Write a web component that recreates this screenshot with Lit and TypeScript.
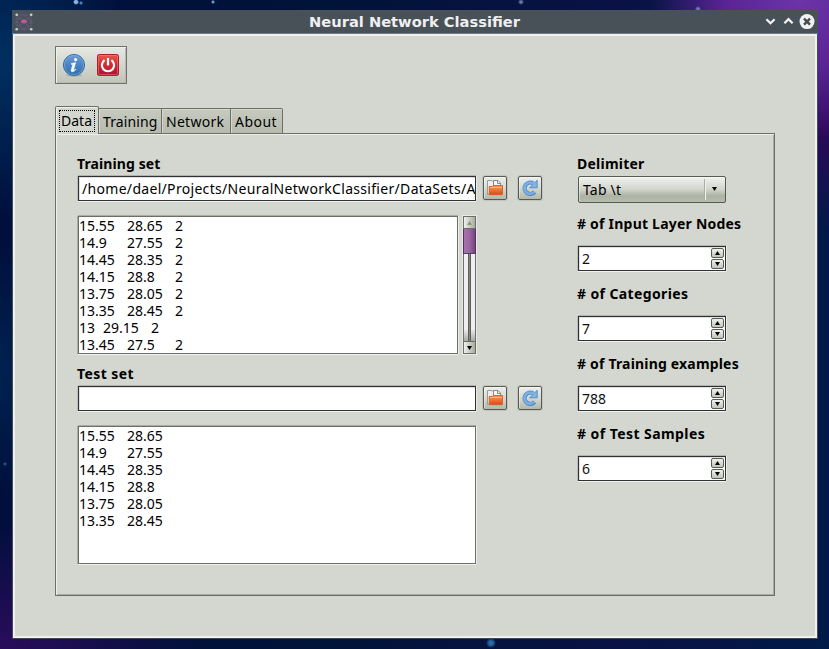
import { LitElement, html, css, svg } from "lit";
import { customElement, property } from "lit/decorators.js";

const ICONS: Record<string, { size: number; art: unknown }> = {
  app: {
    size: 20,
    art: svg`
      <g fill="none" stroke="#75698a" stroke-width=".9">
        <path d="M3 3 L17 3 L17 17 L3 17Z M10 3 L3 10 L10 17 L17 10Z M3 3 L17 17 M17 3 L3 17" stroke-dasharray="2 1" opacity=".7"/>
      </g>
      <g fill="#64508a"><circle cx="10" cy="3" r="1.4"/><circle cx="10" cy="17.3" r="1.4"/><circle cx="2.2" cy="10" r="1.2"/><circle cx="17.8" cy="10" r="1.2"/><circle cx="5.5" cy="6" r="1"/><circle cx="14.5" cy="6" r="1"/><circle cx="5.5" cy="14.5" r="1"/><circle cx="14.5" cy="14.5" r="1"/></g>
      <path d="M6.6 11 C6.8 8.6 8.4 7.2 10 7.2 C11.8 7.2 13.2 8.6 13.4 11 L11.6 10.6 L10 12 L8.4 10.6Z" fill="#bb5a99"/>
      <g fill="#c3d6c4"><circle cx="2.7" cy="2.8" r="1.3"/><circle cx="17.2" cy="2.8" r="1.3"/><circle cx="2.7" cy="17.2" r="1.3"/><circle cx="17.2" cy="17.2" r="1.3"/></g>`,
  },
  down: { size: 11, art: svg`<path d="M1.4 3.2 L5.5 7.2 L9.6 3.2" fill="none" stroke="#f1f1f1" stroke-width="2.3"/>` },
  up: { size: 11, art: svg`<path d="M1.4 7.2 L5.5 3.2 L9.6 7.2" fill="none" stroke="#f1f1f1" stroke-width="2.3"/>` },
  close: {
    size: 16,
    art: svg`<circle cx="8" cy="7.6" r="7.5" fill="#f1f1f1"/><path d="M5 4.6 L11 10.6 M11 4.6 L5 10.6" stroke="#454c54" stroke-width="2.4"/>`,
  },
  info: {
    size: 24,
    art: svg`
      <defs><linearGradient id="ib" x2="0" y2="1"><stop stop-color="#6d9fd5"/><stop offset=".5" stop-color="#4a84c4"/><stop offset="1" stop-color="#2d6fae"/></linearGradient></defs>
      <ellipse cx="12" cy="22.3" rx="8.5" ry="1.4" fill="#000" opacity=".13"/>
      <circle cx="12" cy="12" r="10.6" fill="url(#ib)" stroke="#2d659c" stroke-width=".9"/>
      <circle cx="12" cy="12" r="9.6" fill="none" stroke="#8ab4df" stroke-width=".7" opacity=".8"/>
      <circle cx="13.6" cy="6.6" r="1.6" fill="#fff"/>
      <path d="M9.2 10.6 C10.8 10.1 12.2 9.8 13.7 9.5 L11.8 16.6 C11.6 17.5 12.3 17.3 13.6 16 L14 16.5 C12.5 18.3 11.2 18.9 10 18.8 C8.9 18.6 8.9 17.7 9.2 16.6 L10.7 11.5 L9 11.3Z" fill="#fff" stroke="#fff" stroke-width=".4"/>`,
  },
  power: {
    size: 24,
    art: svg`
      <defs><linearGradient id="pr" x2="0" y2="1"><stop stop-color="#e75a4c"/><stop offset=".5" stop-color="#d52a32"/><stop offset="1" stop-color="#a9113b"/></linearGradient></defs>
      <rect x="1.5" y="1.5" width="21" height="21" rx="1.8" fill="url(#pr)" stroke="#b01c2e"/>
      <rect x="2.5" y="2.5" width="19" height="19" rx="1" fill="none" stroke="#f2907c" stroke-width=".7" opacity=".65"/>
      <path d="M8.6 7.1 A6.1 6.1 0 1 0 15.4 7.1" fill="none" stroke="#fff" stroke-width="2.2"/>
      <path d="M12 5 V12.4" stroke="#fff" stroke-width="2.2"/>`,
  },
  folder: {
    size: 18,
    art: svg`
      <defs><linearGradient id="fo" x2="0" y2="1"><stop stop-color="#ef9a5c"/><stop offset=".45" stop-color="#ee7a30"/><stop offset="1" stop-color="#e0431c"/></linearGradient></defs>
      <path d="M1.5 15.5 V1.5 H6 L8 3.5 H9.5" fill="#eeeeee" stroke="#9a9a9a"/>
      <path d="M7.5 8 V1.5 H12 L14.5 4 V8" fill="#f6f6f6" stroke="#8b8b8b"/>
      <path d="M11.5 1.5 V4.5 H14.5" fill="none" stroke="#8b8b8b"/>
      <path d="M1.5 15.5 H3" stroke="#999"/>
      <path d="M3.2 7.5 H6.5 L7.5 6.5 H16.5 V15 Q16.5 15.7 15.8 15.7 H4 Q3.3 15.7 3.2 15Z" fill="url(#fo)" stroke="#d85a28" stroke-width=".9"/>
      <path d="M4 8.5 H16" stroke="#f6bd92" stroke-width=".9"/>`,
  },
  refresh: {
    size: 18,
    art: svg`
      <path d="M13.6 13 A5.7 5.7 0 1 1 12 4.2" fill="none" stroke="#4d8aca" stroke-width="4.2"/>
      <path d="M16.2 1.2 V8.8 H8.6 L11.2 6.2 L13.4 4Z" fill="#86b3e2" stroke="#4d8aca" stroke-width=".9"/>
      <path d="M13.1 13 A5.6 5.6 0 1 1 12.8 5" fill="none" stroke="#7fafe1" stroke-width="2.5"/>`,
  },
};

@customElement("ui-icon")
class UiIcon extends LitElement {
  @property() name = "";
  static styles = css`
    :host { display: block; line-height: 0; }
    svg { display: block; }
  `;
  render() {
    const icon = ICONS[this.name];
    return html`<svg width=${icon.size} height=${icon.size} viewBox="0 0 ${icon.size} ${icon.size}">${icon.art}</svg>`;
  }
}

@customElement("icon-button")
class IconButton extends LitElement {
  @property() icon = "";
  static styles = css`
    :host { display: block; flex: none; }
    .button {
      box-sizing: border-box; width: 24px; height: 24px; padding: 2px;
      border: 1px solid #555b4f; border-radius: 2px;
      background: linear-gradient(#edeeec, #d5d9d0 50%, #b2b9aa);
      box-shadow: inset 1px 1px 0 rgba(255, 255, 255, .35), 0 0 0 1px rgba(120, 125, 110, .2);
    }
  `;
  render() {
    return html`<div class="button"><ui-icon name=${this.icon}></ui-icon></div>`;
  }
}

@customElement("spin-box")
class SpinBox extends LitElement {
  @property() value = "";
  static styles = css`
    :host { display: block; }
    .box {
      box-sizing: border-box; height: 25px; padding: 1px 1px 1px 3px;
      display: flex; justify-content: space-between;
      background: #fff; border: 1px solid #2f3135;
      box-shadow: 0 -1px 0 #b3b3ae, -1px 0 0 #bbbcb7, 1px 0 0 #e9ebe7, 0 1px 0 #f2f3f0, inset 1px 1px 0 #e2dfe2;
      font: 14px/21px "Noto Sans", sans-serif; color: #111;
    }
    .buttons { display: flex; flex-direction: column; gap: 1px; }
    .step {
      box-sizing: border-box; width: 13px; height: 10px;
      border: 1px solid #565c50; border-radius: 2px;
      display: flex; align-items: center; justify-content: center;
      background: linear-gradient(#f1f1ef, #c0c6ba);
    }
    svg { display: block; }
  `;
  render() {
    return html`<div class="box"><span>${this.value}</span>
      <div class="buttons">
        <div class="step"><svg width="5" height="4"><path d="M0 4 L2.5 0 L5 4Z"/></svg></div>
        <div class="step"><svg width="5" height="4"><path d="M0 0 L2.5 4 L5 0Z"/></svg></div>
      </div></div>`;
  }
}

const TRAINING_ROWS = [
  "15.55\t28.65\t2", "14.9\t27.55\t2", "14.45\t28.35\t2", "14.15\t28.8\t2",
  "13.75\t28.05\t2", "13.35\t28.45\t2", "13\t29.15\t2", "13.45\t27.5\t2",
];
const TEST_ROWS = ["15.55\t28.65", "14.9\t27.55", "14.45\t28.35", "14.15\t28.8", "13.75\t28.05", "13.35\t28.45"];

@customElement("app-root")
class AppRoot extends LitElement {
  static styles = css`
    :host {
      display: block; box-sizing: border-box; width: 829px; height: 649px;
      padding: 10px 11px 10px 12px; overflow: hidden;
      font: 14px/22px "Noto Sans", sans-serif; color: #000;
      background:
        radial-gradient(circle at 76px 2px, #8ab4ee 0 1.5px, transparent 3px),
        radial-gradient(circle at 81px 3px, #4a80b8 0 1px, transparent 2px),
        radial-gradient(circle at 213px 2px, #5aa0c0 0 1px, transparent 2px),
        radial-gradient(circle at 521px 2px, #6878a8 0 1px, transparent 3px),
        radial-gradient(circle at 698px 9px, #7078c8 0 1px, transparent 3px),
        radial-gradient(circle at 491px 643px, #2868a8 0 2px, transparent 5px),
        radial-gradient(circle at 5px 464px, #245080 0 1px, transparent 2px),
        radial-gradient(ellipse 150px 140px at 800px 0, #6c34a8, #5a2494 50%, transparent),
        radial-gradient(ellipse 90px 120px at 829px 110px, #34065c, transparent),
        radial-gradient(ellipse 200px 130px at 0 649px, #2a0c5c, transparent),
        radial-gradient(ellipse 130px 160px at 0 60px, #003060, transparent),
        radial-gradient(ellipse 60px 130px at 0 370px, #002250, transparent),
        linear-gradient(90deg, #000f3c, #001338 40%, #0a1245 75%, #001a48);
    }
    .window {
      box-sizing: border-box; width: 806px; height: 629px;
      border: 1px solid #454c54; border-top: 0;
      display: flex; flex-direction: column;
      background: #d4d7d0;
    }
    .titlebar {
      box-sizing: border-box; flex: none; height: 24px; margin: 0 -1px; padding: 0 3px 0 2px;
      display: grid; grid-template-columns: 50px 1fr 50px; align-items: center;
      background: #485058; border-bottom: 1px solid #3f86c8;
    }
    .title {
      font: bold 14.67px/23px "DejaVu Sans", sans-serif; color: #efefef; text-align: center;
      white-space: nowrap;
    }
    .controls { display: flex; align-items: center; gap: 7px; }
    .controls :last-child { margin-left: -2px; }
    .client {
      flex: 1; box-sizing: border-box; border: 2px solid #eff0f1;
      padding: 10px 40px;
    }
    .toolbar {
      box-sizing: border-box; width: 72px; height: 38px; padding: 6px;
      display: flex; justify-content: space-between;
      border: 1px solid #70726b; box-shadow: inset 1px 1px 0 #eef0ec, inset -1px -1px 0 #b6bab0;
      background: linear-gradient(#e6e8e3, #c0c5b9);
    }
    .tabs { display: flex; align-items: flex-end; height: 27px; margin-top: 23px; margin-bottom: -1px; position: relative; }
    .tab {
      box-sizing: border-box; height: 26px; border: 1px solid #6b6f66; border-left: 0;
      padding-left: 4px; line-height: 25px; white-space: nowrap;
      background: linear-gradient(#c6cabf, #b6bbae); box-shadow: inset 1px 1px 0 #d5d8d0;
    }
    .tab:last-child { border-radius: 0 2px 0 0; }
    .training { width: 63px; letter-spacing: .12px; }
    .network { width: 69px; letter-spacing: .28px; }
    .about { width: 52px; letter-spacing: .45px; }
    .active {
      width: 44px; height: 28px; padding: 3px; border-left: 1px solid #6b6f66; border-bottom: 0;
      border-radius: 2px 2px 0 0; background: #d4d7d0; box-shadow: inset 1px 1px 0 #f0f1ee;
    }
    .focus {
      box-sizing: border-box; height: 22px; width: 36px; border: 1px dotted #000;
      line-height: 20px; padding-left: 1px;
    }
    .panel {
      box-sizing: border-box; width: 720px; height: 463px; padding: 19px 0 0 22px;
      display: flex; gap: 36px;
      border: 1px solid #6b6f66; box-shadow: inset 1px 1px 0 #eceeea, inset -1px -1px 0 #a9aca3;
    }
    .data { width: 464px; }
    .label { height: 23px; margin-left: -1px; font-weight: bold; white-space: nowrap; letter-spacing: .1px; }
    .test { letter-spacing: .4px; }
    .delimiter { letter-spacing: .23px; }
    .file { display: flex; align-items: flex-start; margin-bottom: 15px; }
    .path {
      box-sizing: border-box; width: 398px; height: 25px; padding: 0 0 0 3px; margin-right: 7px;
      overflow: hidden; white-space: nowrap; line-height: 24px; letter-spacing: .31px;
      background: #fff; border: 1px solid #2f3135;
      box-shadow: 0 -1px 0 #b3b3ae, -1px 0 0 #bbbcb7, 1px 0 0 #e9ebe7, 0 1px 0 #f2f3f0, inset 1px 1px 0 #e2dfe2;
    }
    .file icon-button + icon-button { margin-left: 11px; }
    .view { display: flex; gap: 5px; width: 398px; height: 138px; }
    .view + .label { margin-top: 9px; }
    .list {
      flex: 1; box-sizing: border-box; overflow: hidden;
      background: #fff; border: 1px solid #6b6f66;
      box-shadow: 0 -1px 0 #a9aca3, -1px 0 0 #a9aca3, 1px 0 0 #eceeea, 0 1px 0 #f2f3f0;
    }
    .row { height: 17px; line-height: 17px; white-space: pre; tab-size: 24px; }
    .scroll {
      box-sizing: border-box; width: 13px; border: 1px solid #6b6f66;
      display: flex; flex-direction: column; box-shadow: 0 0 0 1px #e8eae5;
    }
    .arrow {
      height: 11px; display: flex; align-items: center; justify-content: center;
      background: linear-gradient(90deg, #eef0ec, #a7ac9f); border-bottom: 1px solid #6b6f66;
    }
    .arrow.bottom { border-bottom: 0; border-top: 1px solid #6b6f66; }
    .thumb {
      height: 25px; background: linear-gradient(90deg, #a873af, #9a66a2 50%, #75467e);
      border-bottom: 1px solid #51405a; margin: 0 -1px; box-sizing: border-box;
      border-left: 1px solid #55305e; border-right: 1px solid #55305e;
    }
    .track {
      flex: 1; display: flex; justify-content: center;
      background: linear-gradient(#f0eef1 86%, #a8a8a8);
    }
    .groove { width: 1px; background: #83877b; border: solid #5c6056; border-width: 0 1px; }
    .settings { width: 148px; }
    .combo {
      box-sizing: border-box; height: 27px; padding: 2px 8px 2px 4px; margin-bottom: 10px;
      display: flex; border: 1px solid #555b4f; border-radius: 2px; line-height: 21px; letter-spacing: .2px;
      background: linear-gradient(#f1f2f0, #d0d4cb 50%, #adb4a4 75%, #b5bcad);
      box-shadow: inset 1px 1px 0 rgba(255,255,255,.4);
    }
    .choice { flex: 1; border-right: 1px solid #a9aea1; }
    .drop { width: 5px; padding-left: 6px; padding-top: 8px; border-left: 1px solid #f0f1ee; }
    .count { margin-bottom: 10px; }
    spin-box { margin-bottom: 12px; }
    svg { display: block; }
  `;

  private file(path: string) {
    return html`<div class="file">
      <div class="path">${path}</div>
      <icon-button icon="folder"></icon-button><icon-button icon="refresh"></icon-button>
    </div>`;
  }

  private list(rows: string[]) {
    return html`<div class="list">${rows.map((r) => html`<div class="row">${r}</div>`)}</div>`;
  }

  render() {
    const counts: [string, string, number][] = [
      ["# of Input Layer Nodes", "2", 0.22],
      ["# of Categories", "7", 0.38],
      ["# of Training examples", "788", 0.18],
      ["# of Test Samples", "6", 0.43],
    ];
    return html`<div class="window">
      <div class="titlebar">
        <ui-icon name="app"></ui-icon>
        <div class="title">Neural Network Classifier</div>
        <div class="controls"><ui-icon name="down"></ui-icon><ui-icon name="up"></ui-icon><ui-icon name="close"></ui-icon></div>
      </div>
      <div class="client">
        <div class="toolbar"><ui-icon name="info"></ui-icon><ui-icon name="power"></ui-icon></div>
        <div class="tabs">
          <div class="tab active"><div class="focus">Data</div></div>
          <div class="tab training">Training</div>
          <div class="tab network">Network</div>
          <div class="tab about">About</div>
        </div>
        <div class="panel">
          <div class="data">
            <div class="label">Training set</div>
            ${this.file("/home/dael/Projects/NeuralNetworkClassifier/DataSets/A")}
            <div class="view">
              ${this.list(TRAINING_ROWS)}
              <div class="scroll">
                <div class="arrow"><svg width="5" height="4"><path d="M0 4 L2.5 0 L5 4Z" fill="#8d9186"/></svg></div>
                <div class="thumb"></div>
                <div class="track"><div class="groove"></div></div>
                <div class="arrow bottom"><svg width="5" height="4"><path d="M0 0 L2.5 4 L5 0Z"/></svg></div>
              </div>
            </div>
            <div class="label test">Test set</div>
            ${this.file("")}
            <div class="view">${this.list(TEST_ROWS)}</div>
          </div>
          <div class="settings">
            <div class="label delimiter">Delimiter</div>
            <div class="combo"><div class="choice">Tab \\t</div><div class="drop"><svg width="5" height="4"><path d="M0 0 L2.5 4 L5 0Z"/></svg></div></div>
            ${counts.map(([name, value, tracking]) => html`
              <div class="label count" style="letter-spacing:${tracking}px">${name}</div>
              <spin-box value=${value}></spin-box>`)}
          </div>
        </div>
      </div>
    </div>`;
  }
}
